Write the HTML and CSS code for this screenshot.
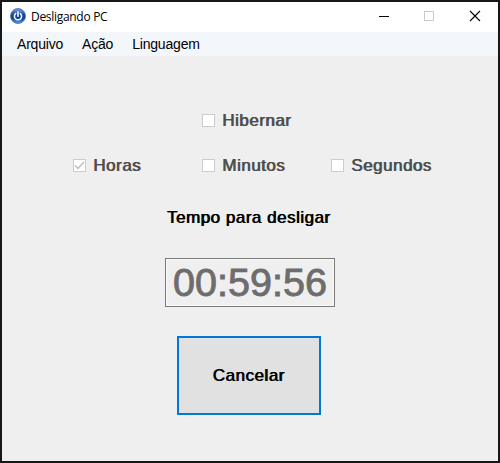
FILE: index.html
```html
<!DOCTYPE html>
<html lang="pt">
<head>
<meta charset="utf-8">
<title>Desligando PC</title>
<link rel="stylesheet" href="styles.css">
</head>
<body>
<div class="window">
  <header class="titlebar">
    <svg class="app-icon" width="16" height="16" viewBox="0 0 16 16">
      <defs>
        <linearGradient id="ball" x1="0" y1="0" x2="0" y2="1">
          <stop offset="0" stop-color="#7ba4dc"/>
          <stop offset=".4" stop-color="#184a9f"/>
          <stop offset=".65" stop-color="#0d409c"/>
          <stop offset="1" stop-color="#5aa5ea"/>
        </linearGradient>
      </defs>
      <circle cx="8" cy="8" r="7.5" fill="url(#ball)" stroke="#3c69b4" stroke-width=".8"/>
      <path d="M5.7 5.5a3.6 3.6 0 1 0 4.6 0M8 3.7v4.5" fill="none" stroke="#fff" stroke-width="1.5" stroke-linecap="round"/>
    </svg>
    <span class="title">Desligando PC</span>
    <svg class="controls" width="102" height="12" viewBox="0 0 102 12" fill="none" shape-rendering="crispEdges">
      <path d="M0 6.5h10" stroke="#000"/>
      <rect x="45.5" y="1.5" width="9" height="9" stroke="#ccc"/>
      <path d="M91 1l10 10M101 1L91 11" stroke="#000" stroke-width="1.1" shape-rendering="auto"/>
    </svg>
  </header>
  <nav class="menu">
    <span>Arquivo</span>
    <span>Ação</span>
    <span>Linguagem</span>
  </nav>
  <main class="content">
    <div class="options">
      <label class="option hibernate"><i class="box"></i><span>Hibernar</span></label>
      <label class="option"><i class="box"><svg width="11" height="11" viewBox="0 0 11 11"><path d="M1 5.5l3 3L10 2" fill="none" stroke="#bcbcbc" stroke-width="1.3"/></svg></i><span>Horas</span></label>
      <label class="option"><i class="box"></i><span>Minutos</span></label>
      <label class="option"><i class="box"></i><span>Segundos</span></label>
    </div>
    <div class="caption">Tempo para desligar</div>
    <div class="clock">00:59:56</div>
    <button class="cancel">Cancelar</button>
  </main>
</div>
</body>
</html>
```
FILE: styles.css
```css
* { box-sizing: border-box; }

body {
  margin: 0;
  font-family: "Liberation Sans", Arial, sans-serif;
  color: #000;
}

.window {
  width: 500px;
  height: 463px;
  border: 2px solid #171717;
  background: #efefef;
  display: flex;
  flex-direction: column;
}

.titlebar {
  height: 30px;
  background: #fff;
  display: flex;
  align-items: center;
  padding: 0 17px 0 8px;
}

.app-icon { margin-top: -2px; }

.title {
  margin-left: 5px;
  font: 12px/16px "Open Sans", sans-serif;
  letter-spacing: -0.3px;
  white-space: nowrap;
}

.controls { margin: -2px 0 0 auto; }

.menu {
  height: 24px;
  background: #f3f7fc;
  display: flex;
  gap: 19px;
  padding-left: 15px;
  font-size: 14px;
  letter-spacing: -0.2px;
  line-height: 25px;
}

.content {
  flex: 1;
  display: flex;
  flex-direction: column;
  align-items: center;
  font-size: 17px;
  letter-spacing: 0.5px;
}

.options {
  align-self: flex-start;
  margin: 54px 0 0 71px;
  display: grid;
  grid-template-columns: 129px 129px 110px;
  row-gap: 25px;
}

.option {
  display: flex;
  align-items: center;
  height: 20px;
  color: #4d4d4d;
  text-shadow: 0.8px 0 currentColor;
}

.option span { padding-top: 2px; }

.hibernate { grid-column: 2 / 4; }

.box {
  width: 13px;
  height: 13px;
  margin-right: 7px;
  border: 1px solid #ccc;
  background: #fff;
  display: flex;
}

.caption {
  margin: 33px 3px 0 0;
  line-height: 20px;
  text-shadow: 0.8px 0 currentColor;
}

.clock {
  width: 170px;
  height: 49px;
  margin-top: 30px;
  border: 1px solid #7a7a7a;
  box-shadow: inset 0 0 0 1px #fafafa;
  color: #6d6d6d;
  font-size: 39.5px;
  line-height: 47px;
  letter-spacing: 0;
  text-align: center;
  -webkit-text-stroke: 0.9px #6d6d6d;
}

.cancel {
  width: 144px;
  height: 79px;
  margin: 29px 3px 0 0;
  padding: 0;
  border: 2px solid #0078d7;
  background: #e1e1e1;
  color: #000;
  font: inherit;
  letter-spacing: 0.5px;
  text-shadow: 0.8px 0 currentColor;
}
```
